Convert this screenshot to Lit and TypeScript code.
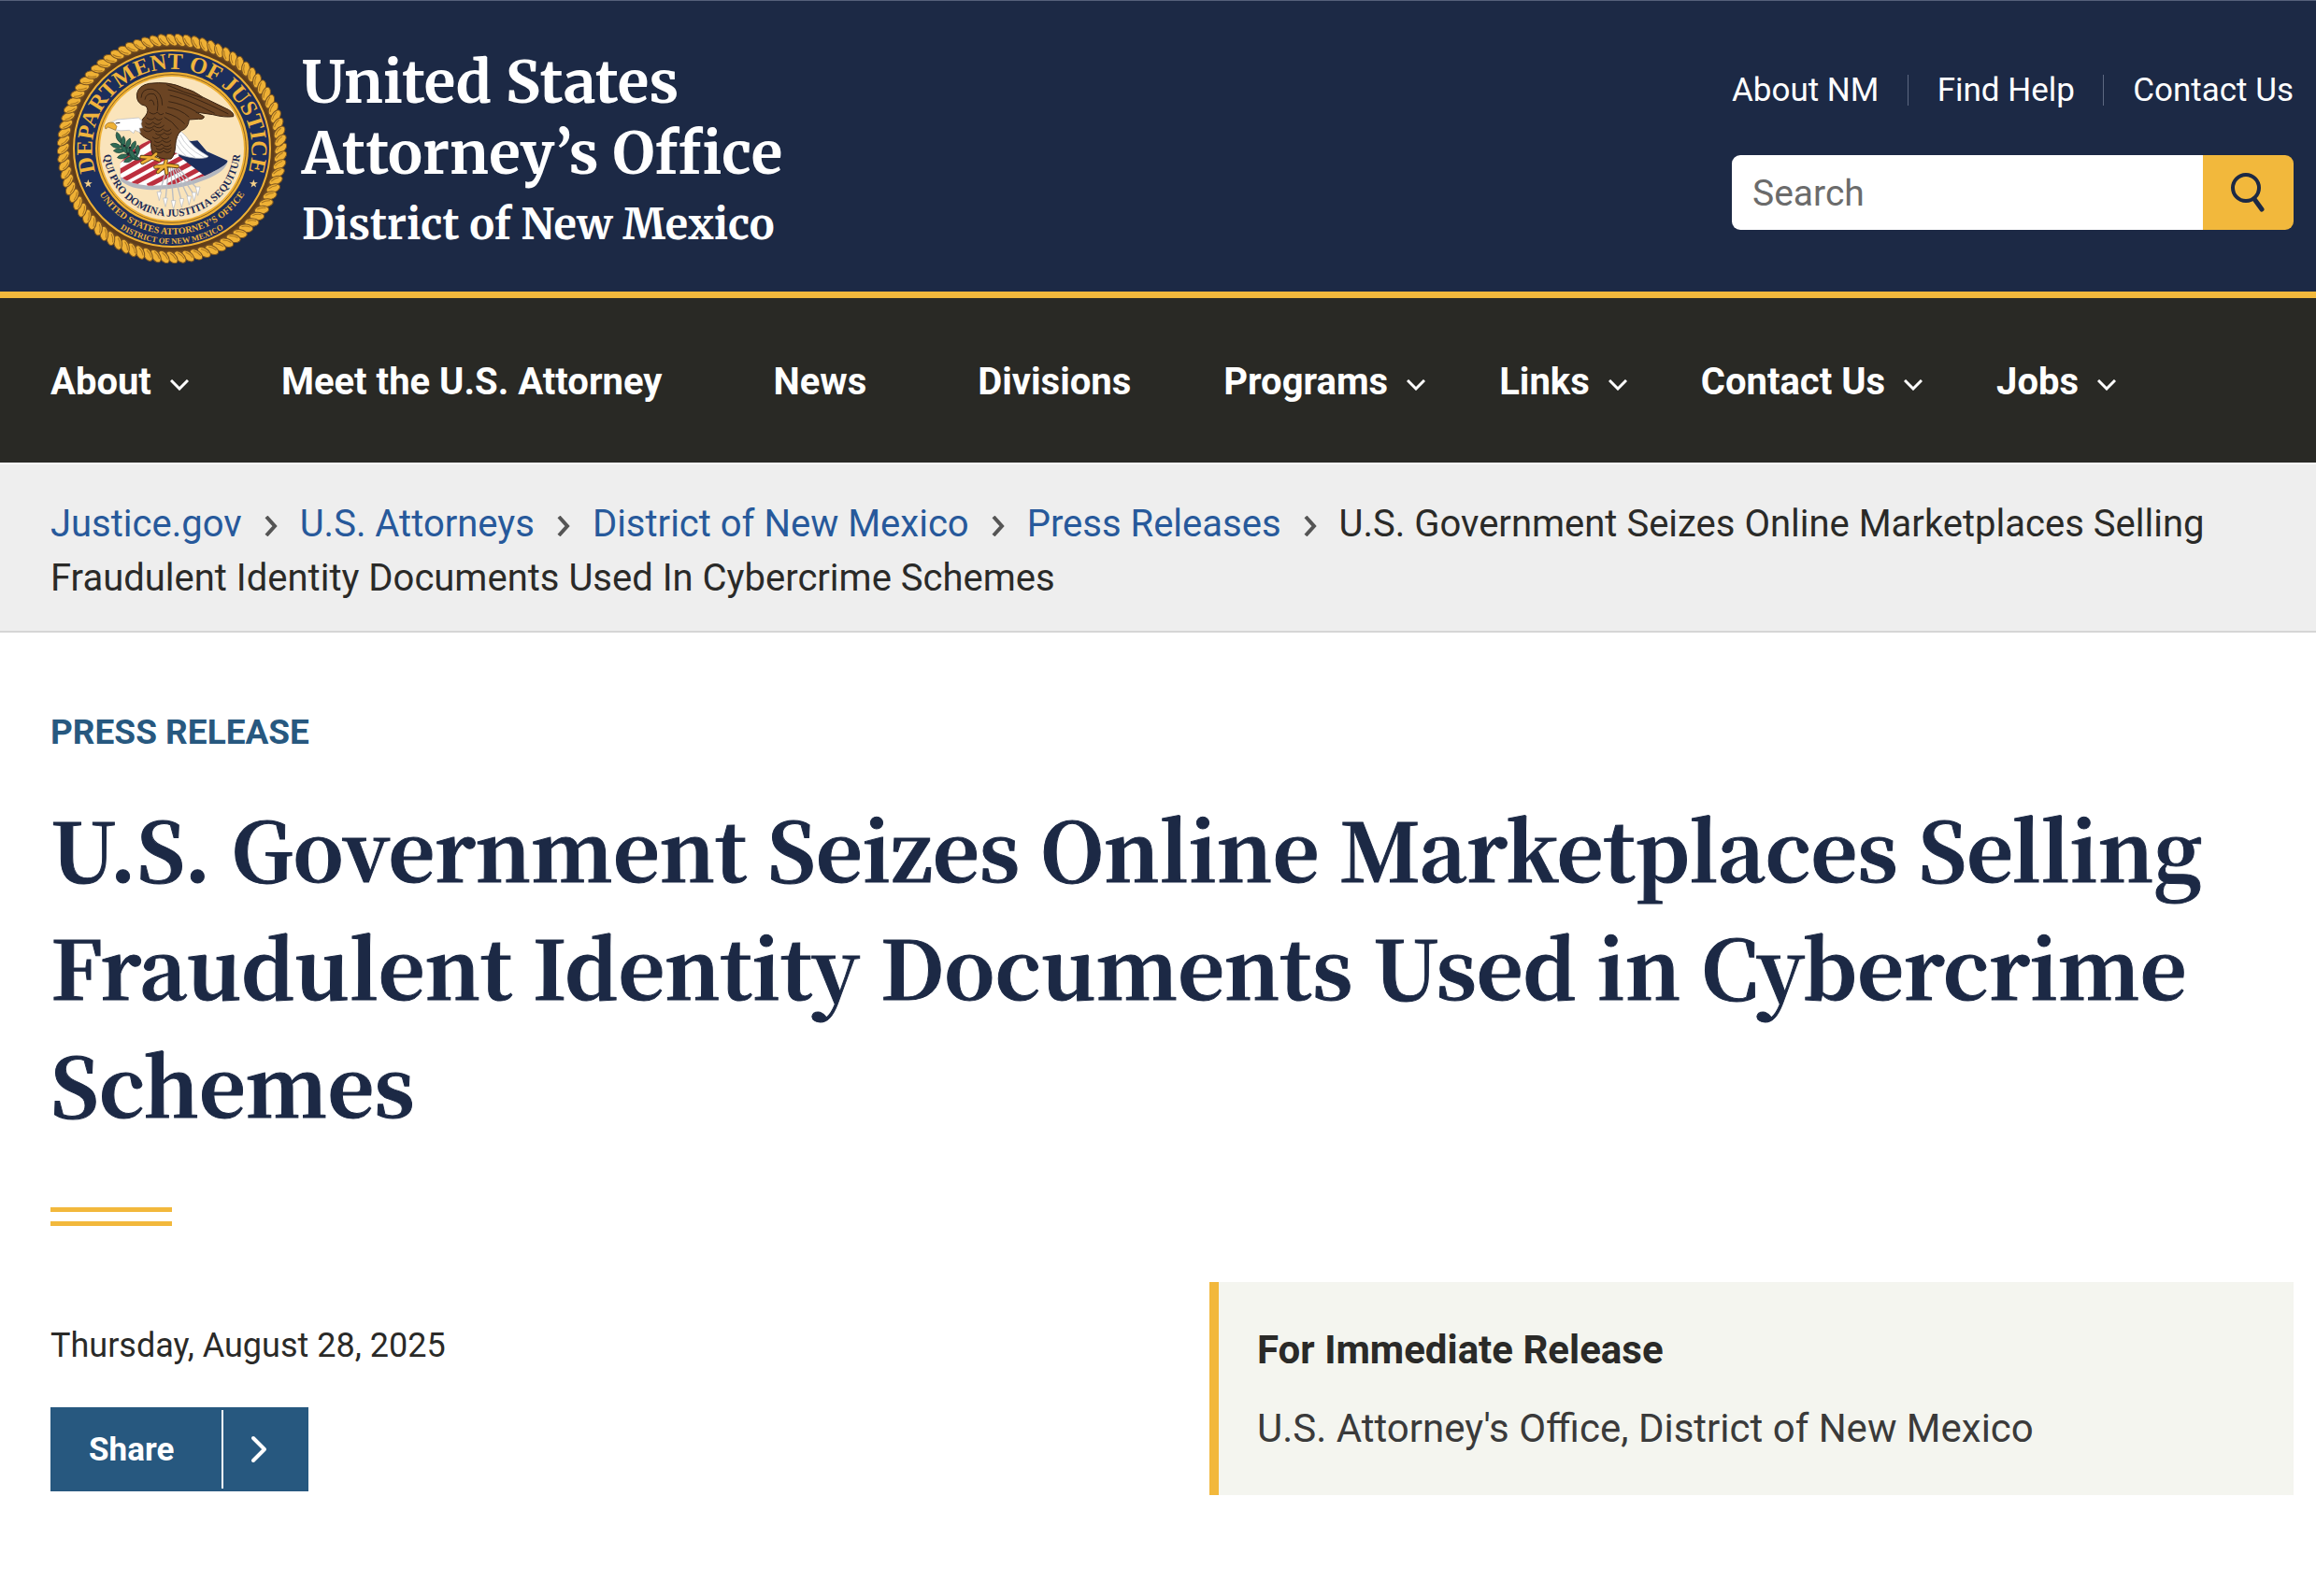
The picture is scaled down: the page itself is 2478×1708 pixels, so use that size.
import { LitElement, html, css, svg } from "lit";
import { customElement } from "lit/decorators.js";

const CX = 403;
const CY = 401;

const polar = (r: number, deg: number): [number, number] => {
  const a = (deg * Math.PI) / 180;
  return [Math.round(CX + r * Math.cos(a)), Math.round(CY + r * Math.sin(a))];
};

const star = (x: number, y: number, r: number) =>
  Array.from({ length: 10 }, (_, i) => {
    const a = (-90 + i * 36) * (Math.PI / 180);
    const d = i % 2 ? r * 0.4 : r;
    return `${(x + d * Math.cos(a)).toFixed(1)},${(y + d * Math.sin(a)).toFixed(1)}`;
  }).join(" ");

/** Department seal: rope border, lettered ring, eagle over shield. */
@customElement("doj-seal")
export class DojSeal extends LitElement {
  static styles = css`
    :host { display: block; flex: none; width: 246px; height: 246px; }
    svg { display: block; width: 100%; height: 100%; }
    text { font-family: "Liberation Serif", serif; font-weight: 700; }
    .ring { font-size: 73px; fill: #f0b43c; }
    .motto { font-size: 34px; fill: #1c2b55; }
    .office { font-size: 30px; fill: #f0b43c; }
    .district { font-size: 26px; fill: #f0b43c; }
  `;

  private strands() {
    const n = 84;
    return Array.from({ length: n }, (_, i) => {
      const deg = (i * 360) / n;
      const [x, y] = polar(349, deg);
      return svg`<g transform="translate(${x} ${y}) rotate(${deg + 138})">
        <ellipse rx="23" ry="13" fill="#efb135" stroke="#7a5320" stroke-width="3"/>
        <path d="M-14 5Q0 9 14 4" fill="none" stroke="#a87420" stroke-width="3"/>
      </g>`;
    });
  }

  private arrows() {
    return [362, 382, 408, 434, 458, 474, 486].map((x, i) => {
      const y = [566, 586, 594, 588, 580, 568, 550][i];
      return svg`<path d="M${388 + i * 5} 458L${x} ${y - 18}" stroke="#b9bcc2" stroke-width="4"/>
        <path d="M${x - 7} ${y - 26}L${x + 7} ${y - 26}L${x} ${y + 2}Z" fill="#fff" stroke="#b4b7bd" stroke-width="2"/>`;
    });
  }

  private leaves() {
    const stem: [number, number, number][] = [
      [232, 366, 70], [224, 392, 15], [246, 380, 95], [262, 386, 110], [234, 408, 0],
      [250, 402, 60], [278, 394, 115], [246, 426, -12], [268, 412, 50], [266, 436, -25],
      [292, 408, 95], [284, 430, 20], [276, 420, 60],
    ];
    return stem.map(
      ([x, y, r]) =>
        svg`<path transform="translate(${x} ${y}) rotate(${r})" d="M-19 0Q-4 -14 19 0Q-4 14 -19 0Z" fill="#2f6b55" stroke="#173f34" stroke-width="2"/>`
    );
  }

  render() {
    return html`<svg viewBox="34 32 738 738" role="img" aria-label="Department of Justice seal">
      <defs>
        <path id="top" d="M${polar(256, 150).join(" ")}A256 256 0 1 1 ${polar(256, 30).join(" ")}" />
        <path id="motto" d="M${polar(220, 190).join(" ")}A220 220 0 1 0 ${polar(220, -10).join(" ")}" />
        <path id="office" d="M${polar(274, 170).join(" ")}A274 274 0 0 0 ${polar(274, 10).join(" ")}" />
        <path id="district" d="M${polar(305, 160).join(" ")}A305 305 0 0 0 ${polar(305, 20).join(" ")}" />
        <clipPath id="shield">
          <path d="M330 375L440 372L465 377L485 375L515 410L582 440Q580 456 510 487Q430 522 330 520Q268 516 238 492L236 448Q280 395 330 375Z" />
        </clipPath>
      </defs>
      <circle cx=${CX} cy=${CY} r="350" fill="#6a4620" />
      ${this.strands()}
      <circle cx=${CX} cy=${CY} r="323" fill="#efb135" stroke="#5f3d1a" stroke-width="10" />
      <circle cx=${CX} cy=${CY} r="312" fill="#1c2e5c" />
      <circle cx=${CX} cy=${CY} r="246" fill="#efb135" />
      <circle cx=${CX} cy=${CY} r="238" fill="none" stroke="#8e6421" stroke-width="3" />
      <circle cx=${CX} cy=${CY} r="231" fill="#fae4bb" />
      <text class="ring" text-anchor="middle"><textPath href="#top" startOffset="50%">DEPARTMENT OF JUSTICE</textPath></text>
      <text class="motto" text-anchor="middle"><textPath href="#motto" startOffset="50%">QUI PRO DOMINA JUSTITIA SEQUITUR</textPath></text>
      <text class="office" text-anchor="middle"><textPath href="#office" startOffset="50%">UNITED STATES ATTORNEY’S OFFICE</textPath></text>
      <text class="district" text-anchor="middle"><textPath href="#district" startOffset="50%">DISTRICT OF NEW MEXICO</textPath></text>
      <polygon points=${star(134, 514, 14)} fill="#f4d08a" />
      <polygon points=${star(665, 514, 14)} fill="#f4d08a" />

      <path d="M236 462L238 504Q268 532 340 534Q440 532 512 500Q578 474 582 440L560 450Z" fill="#b3b7c0" />
      <g clip-path="url(#shield)">
        <rect x="230" y="360" width="360" height="170" fill="#fff" />
        <g stroke="#bc2f3e" stroke-width="15">
          <path d="M225 446L345 366" />
          <path d="M225 481L385 388" />
          <path d="M225 514L420 408" />
          <path d="M268 520L450 422" />
          <path d="M325 521L480 440" />
          <path d="M390 520L500 462" />
          <path d="M450 516L530 476" />
        </g>
        <path d="M410 360L425 425L512 492L600 470L600 400L500 360Z" fill="#1c2e5c" />
      </g>
      ${this.arrows()}
      ${this.leaves()}
      <g fill="#23202a"><circle cx="250" cy="392" r="4" /><circle cx="268" cy="398" r="4" /><circle cx="262" cy="418" r="4" /><circle cx="284" cy="414" r="4" /></g>
      <path d="M418 344Q436 344 448 362Q470 398 520 426Q514 434 478 432Q436 426 410 412Z" fill="#fff" stroke="#b4b7bd" stroke-width="2" />
      <path d="M430 356Q446 398 508 430M424 372Q440 404 478 430M418 388Q430 410 450 426" fill="none" stroke="#b4b7bd" stroke-width="2" />
      <path d="M290 226Q296 198 330 192Q392 184 440 206Q472 214 502 236L584 276Q604 288 600 298Q572 302 534 292L480 284L506 298Q506 308 488 306L458 308Q456 336 432 344Q416 358 414 392Q412 424 400 434Q366 438 340 416Q334 396 336 376Q302 362 298 344Q298 314 318 296Q332 276 318 264Q288 258 290 226Z" fill="#6b4423" stroke="#3a2413" stroke-width="3" />
      <g fill="none" stroke="#3a2413" stroke-width="3">
        <path d="M304 238Q306 206 340 210Q372 220 372 262M316 244Q320 220 346 226Q362 240 356 280M330 248Q342 238 346 262" />
        <path d="M390 212Q450 222 584 290M396 230Q450 242 540 288M392 250Q440 258 480 282M388 268Q430 274 458 300M382 286Q420 296 444 322M378 300Q404 312 424 340M386 196Q440 222 500 238" />
        <path d="M318 318Q330 330 342 316Q356 332 368 316M312 340Q326 354 342 338Q358 356 374 338Q388 352 400 338M340 364Q352 376 366 362Q380 378 394 364M344 388Q356 400 370 386Q384 402 400 388M350 410Q364 420 376 408Q388 420 400 408" />
        <path d="M330 284Q344 296 356 284Q366 298 376 288M322 302Q336 314 348 302Q360 316 372 304M316 330Q332 342 346 328Q362 342 378 326M350 352Q364 364 378 350Q390 362 402 350M346 376Q358 388 372 374Q386 388 400 374M352 400Q364 410 376 398Q388 410 402 398" />
      </g>
      <path d="M206 318Q226 304 250 306L296 302L307 312L304 322L308 334L298 336L302 350L284 342L280 352L266 342Q236 346 216 340Q204 332 206 318Z" fill="#fff" stroke="#b4b7bd" stroke-width="2" />
      <path d="M222 320L236 318" stroke="#23202a" stroke-width="3" />
      <path d="M216 318Q194 314 188 330L190 338L198 332L222 342L226 330Z" fill="#efb135" stroke="#8e6421" stroke-width="2" />
      <g fill="none" stroke="#5c3f14" stroke-width="13" stroke-linecap="round" stroke-linejoin="round">
        <path d="M352 418L338 430L306 428M338 430L308 446M340 430L362 438" />
        <path d="M384 440L380 456L350 460M380 456L358 476M382 456L386 480M384 454L420 458" />
      </g>
      <g fill="none" stroke="#efb135" stroke-width="8" stroke-linecap="round" stroke-linejoin="round">
        <path d="M352 418L338 430L306 428M338 430L308 446M340 430L362 438" />
        <path d="M384 440L380 456L350 460M380 456L358 476M382 456L386 480M384 454L420 458" />
      </g>
    </svg>`;
  }
}

interface NavItem { label: string; menu: boolean; }

const NAV: NavItem[] = [
  { label: "About", menu: true },
  { label: "Meet the U.S. Attorney", menu: false },
  { label: "News", menu: false },
  { label: "Divisions", menu: false },
  { label: "Programs", menu: true },
  { label: "Links", menu: true },
  { label: "Contact Us", menu: true },
  { label: "Jobs", menu: true },
];

const CRUMBS = ["Justice.gov", "U.S. Attorneys", "District of New Mexico", "Press Releases"];

@customElement("app-root")
export class AppRoot extends LitElement {
  static styles = css`
    :host {
      display: block;
      min-height: 100vh;
      background: #fff;
      color: #2a2a28;
      font-family: Roboto, "Liberation Sans", sans-serif;
      font-size: 40px;
      --navy: #1c2945;
      --gold: #f2b83c;
      --blue: #27587f;
    }
    * { box-sizing: border-box; }
    a { color: inherit; text-decoration: none; }
    ul, ol, h1, h2, p { margin: 0; padding: 0; list-style: none; }
    button { border: 0; padding: 0; font: inherit; cursor: pointer; }
    svg { display: block; fill: none; stroke: currentColor; }

    .masthead {
      display: flex;
      justify-content: space-between;
      padding: 0 24px 0 61px;
      border-top: 1px solid #55607a;
      border-bottom: 7px solid var(--gold);
      background: var(--navy);
      color: #fff;
    }
    .brand { display: flex; gap: 16px; padding-top: 35px; }
    .names {
      display: flex;
      flex-direction: column;
      padding-top: 14px;
      font: 700 62px/76px Merriweather, "Noto Serif", serif;
    }
    .names .district { font-size: 45px; }
    .tools { width: 601px; padding: 79px 0 66px; }
    .utility {
      display: flex;
      justify-content: space-between;
      height: 33px;
      margin-bottom: 53px;
      font-size: 35px;
      line-height: 34px;
      white-space: nowrap;
    }
    .utility li + li { padding-left: 31px; border-left: 1px solid #5d6881; }
    .search { display: flex; height: 80px; border-radius: 9px; overflow: hidden; }
    .search input {
      flex: 1;
      min-width: 0;
      padding: 2px 22px 0;
      border: 0;
      background: #fff;
      color: #2a2a28;
      font: inherit;
      font-size: 39px;
    }
    .search input::placeholder { color: #6b6b6b; opacity: 1; }
    .search button {
      display: grid;
      place-items: center;
      width: 97px;
      background: var(--gold);
      color: var(--navy);
    }

    .nav { background: #292925; color: #fff; }
    .nav ul {
      display: flex;
      align-items: center;
      gap: 79px;
      min-height: 176px;
      padding: 2px 24px 0 54px;
      font-weight: 700;
      white-space: nowrap;
    }
    .nav .plain { padding: 0 20px; }
    .nav button {
      display: flex;
      align-items: center;
      gap: 20px;
      background: none;
      color: inherit;
    }
    .nav button svg { margin-top: 8px; }

    .crumbs {
      padding: 35px 24px 27px 54px;
      border-top: 2px solid #fafafa;
      border-bottom: 2px solid #d6d6d6;
      background: #eee;
      line-height: 58px;
    }
    .crumbs li { display: inline; }
    .crumbs a { color: #27599b; }
    .crumbs svg { display: inline-block; margin: 0 24px; color: #555; }

    .content { padding: 83px 24px 108px 54px; }
    .eyebrow { color: var(--blue); font-size: 37px; font-weight: 700; line-height: 48px; }
    h1 {
      margin-top: 36px;
      color: var(--navy);
      font: 700 87px/126px "Noto Serif CJK SC", "Noto Serif", serif;
      -webkit-text-stroke: 1px var(--navy);
    }
    .rule {
      width: 130px;
      height: 20px;
      margin-top: 70px;
      border: solid var(--gold);
      border-width: 5px 0;
    }
    .meta {
      display: grid;
      grid-template-columns: 1fr 1fr;
      gap: 80px;
      margin-top: 60px;
    }
    .dateline { padding-top: 44px; font-size: 36px; line-height: 48px; }
    .share {
      display: flex;
      align-items: center;
      height: 90px;
      margin-top: 42px;
      padding: 3px 0;
      background: var(--blue);
      color: #fff;
      font-size: 35px;
      font-weight: 700;
    }
    .share .label { width: 183px; padding: 0 41px; text-align: left; }
    .share .arrow {
      display: grid;
      align-items: center;
      width: 93px;
      height: 84px;
      padding-left: 29px;
      border-left: 2px solid #fff;
    }
    .notice {
      padding: 49px 40px 47px 41px;
      border-left: 10px solid var(--gold);
      background: #f4f5ef;
      font-size: 42px;
      line-height: 48px;
    }
    .notice h2 { font-size: 42px; font-weight: 700; }
    .notice p { margin-top: 36px; color: #3a3a3a; }
  `;

  private chevronDown = () => html`<svg width="20" height="12" viewBox="0 0 20 12" stroke-width="3" aria-hidden="true"><path d="M1 1L10 10L19 1" /></svg>`;
  private chevronRight = () => html`<svg width="14" height="22" viewBox="0 0 14 22" stroke-width="4" aria-hidden="true"><path d="M2 1L11 11L2 21" /></svg>`;

  render() {
    return html`
      <header class="masthead">
        <a class="brand" href="#">
          <doj-seal></doj-seal>
          <span class="names">
            <span>United States</span>
            <span>Attorney’s Office</span>
            <span class="district">District of New Mexico</span>
          </span>
        </a>
        <div class="tools">
          <ul class="utility">
            <li><a href="#">About NM</a></li>
            <li><a href="#">Find Help</a></li>
            <li><a href="#">Contact Us</a></li>
          </ul>
          <form class="search" role="search">
            <input type="search" placeholder="Search" aria-label="Search" />
            <button type="button" aria-label="Submit search">
              <svg width="40" height="46" viewBox="0 0 40 46" stroke-width="4" stroke-linecap="round" aria-hidden="true">
                <circle cx="17" cy="18" r="14" />
                <path d="M26 30L34 41" stroke-width="5" />
              </svg>
            </button>
          </form>
        </div>
      </header>

      <nav class="nav" aria-label="Main">
        <ul>
          ${NAV.map((n) =>
            n.menu
              ? html`<li><button type="button" aria-expanded="false">${n.label}${this.chevronDown()}</button></li>`
              : html`<li class="plain"><a href="#">${n.label}</a></li>`
          )}
        </ul>
      </nav>

      <nav class="crumbs" aria-label="Breadcrumb">
        <ol>${CRUMBS.map((c) => html`<li><a href="#">${c}</a>${this.chevronRight()}</li>`)}<li aria-current="page">U.S. Government Seizes Online Marketplaces Selling Fraudulent Identity Documents Used In Cybercrime Schemes</li></ol>
      </nav>

      <main class="content">
        <p class="eyebrow">PRESS RELEASE</p>
        <h1>U.S. Government Seizes Online Marketplaces Selling Fraudulent Identity Documents Used in Cybercrime Schemes</h1>
        <div class="rule"></div>
        <div class="meta">
          <div>
            <p class="dateline">Thursday, August 28, 2025</p>
            <button class="share" type="button">
              <span class="label">Share</span>
              <span class="arrow">
                <svg width="18" height="30" viewBox="0 0 18 30" stroke-width="4" stroke-linecap="round" stroke-linejoin="round" aria-hidden="true"><path d="M3 3L15 15L3 27" /></svg>
              </span>
            </button>
          </div>
          <aside class="notice">
            <h2>For Immediate Release</h2>
            <p>U.S. Attorney's Office, District of New Mexico</p>
          </aside>
        </div>
      </main>
    `;
  }
}
